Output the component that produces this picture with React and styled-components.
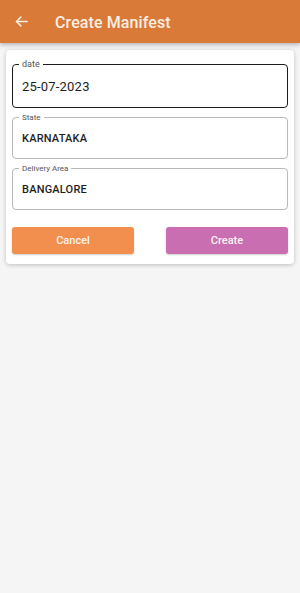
import React from "react";
import styled, { createGlobalStyle } from "styled-components";

const GlobalStyle = createGlobalStyle`
  html, body {
    margin: 0;
    padding: 0;
    background: #f5f5f5;
    font-family: Roboto, "Liberation Sans", sans-serif;
  }
  * { box-sizing: border-box; }
`;

const Page = styled.div`
  width: 300px;
  min-height: 593px;
  background: #f5f5f5;
`;

const Header = styled.header`
  height: 43px;
  background: #d97a38;
  display: flex;
  align-items: center;
  padding-left: 13px;
  box-shadow: 0 2px 4px rgba(0, 0, 0, 0.25);
`;

const BackButton = styled.button`
  width: 16px;
  height: 16px;
  padding: 0;
  border: none;
  background: none;
  display: flex;
  align-items: center;
  justify-content: center;
  margin-right: 26px;
  color: #fbeee3;
`;

const Title = styled.h1`
  margin: 0 0 -1px;
  font-size: 16px;
  font-weight: 500;
  color: #fbeee3;
  letter-spacing: 0.1px;
`;

const Card = styled.div`
  margin: 7px 6px 0;
  background: #fff;
  border-radius: 4px;
  box-shadow: 0 1px 4px rgba(0, 0, 0, 0.22);
  padding: 14px 6px 10px;
  display: flex;
  flex-direction: column;
  gap: 9px;
`;

const Field = styled.div`
  position: relative;
  height: ${(p) => p.$height}px;
  padding: 0 9px;
  border: 1px solid ${(p) => (p.$focused ? "#1c1c1c" : "#b8b8b8")};
  border-radius: 4px;
  display: flex;
  align-items: center;
`;

const Label = styled.span`
  position: absolute;
  top: 0;
  left: 6px;
  transform: translateY(-55%);
  padding: 0 3px;
  background: #fff;
  font-size: ${(p) => (p.$focused ? 9 : 8)}px;
  color: #555;
  line-height: 1;
`;

const Value = styled.div`
  font-size: ${(p) => (p.$large ? 13 : 11)}px;
  font-weight: ${(p) => (p.$large ? 400 : 500)};
  color: #1e1e1e;
  letter-spacing: 0.2px;
`;

const Actions = styled.div`
  display: flex;
  justify-content: space-between;
  margin-top: 8px;
`;

const Button = styled.button`
  width: 122px;
  height: 27px;
  border: none;
  border-radius: 3px;
  background: ${(p) => p.$bg};
  color: #fdf3f0;
  font-family: Roboto, "Liberation Sans", sans-serif;
  font-size: 11px;
  font-weight: 500;
  box-shadow: 0 1px 2px rgba(0, 0, 0, 0.2);
`;

const fields = [
  { label: "date", value: "25-07-2023", focused: true, large: true, height: 44 },
  { label: "State", value: "KARNATAKA", height: 42 },
  { label: "Delivery Area", value: "BANGALORE", height: 42 },
];

export default function App() {
  return (
    <Page>
      <GlobalStyle />
      <Header>
        <BackButton aria-label="back">
          <svg width="15" height="15" viewBox="0 0 24 24" fill="none" stroke="currentColor" strokeWidth="2.4" strokeLinecap="round" strokeLinejoin="round">
            <path d="M21 12H4" />
            <path d="M11 5l-7 7 7 7" />
          </svg>
        </BackButton>
        <Title>Create Manifest</Title>
      </Header>
      <Card>
        {fields.map((f) => (
          <Field key={f.label} $focused={f.focused} $height={f.height}>
            <Label $focused={f.focused}>{f.label}</Label>
            <Value $large={f.large}>{f.value}</Value>
          </Field>
        ))}
        <Actions>
          <Button $bg="#f28f4f">Cancel</Button>
          <Button $bg="#c96eb0">Create</Button>
        </Actions>
      </Card>
    </Page>
  );
}
